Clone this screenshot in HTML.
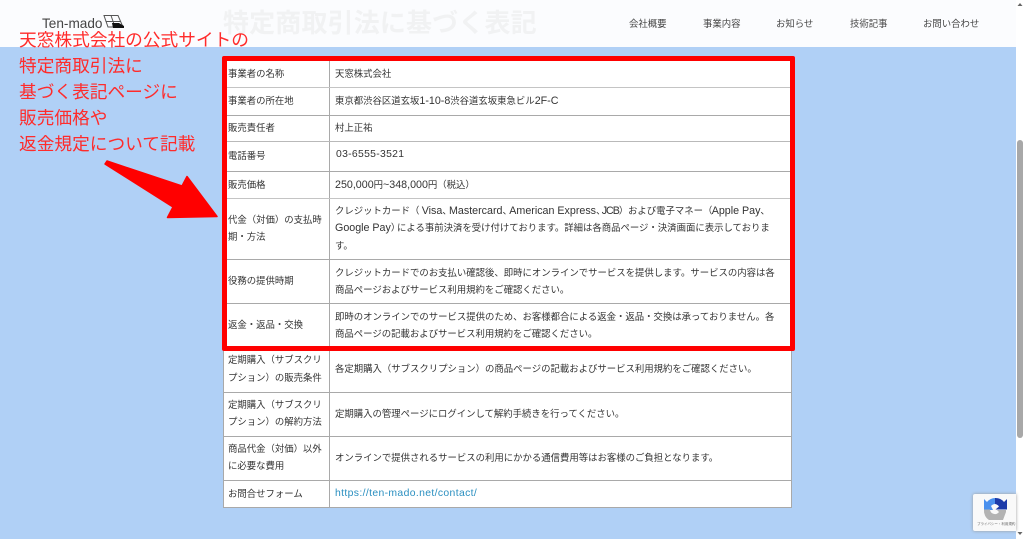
<!DOCTYPE html>
<html lang="ja"><head><meta charset="utf-8"><title>特定商取引法に基づく表記</title>
<style>
html,body{margin:0;padding:0;width:1024px;height:539px;overflow:hidden;background:#b0d0f6;}
body{position:relative;font-family:"Liberation Sans","Noto Sans CJK JP",sans-serif;color:#333;}
.a{position:absolute;white-space:nowrap;}
.t{position:absolute;white-space:nowrap;font-size:9.4px;line-height:14px;color:#333;}
.t b{font-weight:400;font-size:10.7px;}
.l{left:228px}.r{left:335px}
.h{position:absolute;left:224px;width:568px;height:1px;background:#a9a9a9;}
.n{position:absolute;top:17px;font-size:9.4px;line-height:14px;color:#444;white-space:nowrap;}
.m{position:absolute;left:19px;font-size:17.7px;line-height:26px;color:#ff2b2b;white-space:nowrap;}
</style></head><body>
<div class="a" style="left:0;top:0;width:1016px;height:47px;background:#fbfcfe;"></div>
<div class="a" style="left:223px;top:7px;font-size:26px;letter-spacing:.15px;line-height:32px;font-weight:700;color:#f1f2f3;">特定商取引法に基づく表記</div>
<div class="a" style="left:42px;top:15px;font-size:13.6px;line-height:18px;color:#444;">Ten-mado</div>
<svg class="a" style="left:100px;top:10px" width="30" height="24" viewBox="100 10 30 24"><g fill="none" stroke="#555" stroke-width="1"><path d="M104 15.500H118L123 27H108Z"/><path d="M105.500 21.500H120.500M111 15.500L115 27"/></g><path d="M112 23H119L124 26V28H113Z" fill="#111"/></svg>
<span class="n" style="left:629px">会社概要</span>
<span class="n" style="left:703px">事業内容</span>
<span class="n" style="left:776px">お知らせ</span>
<span class="n" style="left:850px">技術記事</span>
<span class="n" style="left:923px">お問い合わせ</span>

<div class="a" style="left:223px;top:56px;width:569px;height:452px;background:#fff;border-right:1px solid #a9a9a9;border-left:1px solid #a9a9a9;border-bottom:1px solid #a9a9a9;box-sizing:border-box;"></div>
<div class="a" style="left:329px;top:56px;width:1px;height:452px;background:#a9a9a9;"></div>
<div class="h" style="top:87px;background:#c4c4c4"></div><div class="h" style="top:115px"></div><div class="h" style="top:141px;background:#b9b9b9"></div><div class="h" style="top:171px"></div><div class="h" style="top:198px;background:#c4c4c4"></div><div class="h" style="top:259px"></div><div class="h" style="top:303px"></div><div class="h" style="top:392px"></div><div class="h" style="top:436px"></div><div class="h" style="top:480px"></div>

<span class="t l" style="top:67px">事業者の名称</span><span class="t r" style="top:67px">天窓株式会社</span>
<span class="t l" style="top:94px">事業者の所在地</span><span class="t r" style="top:94px">東京都渋谷区道玄坂<b>1-10-8</b>渋谷道玄坂東急ビル<b>2F-C</b></span>
<span class="t l" style="top:121px">販売責任者</span><span class="t r" style="top:121px">村上正祐</span>
<span class="t l" style="top:149px">電話番号</span><span class="t" style="left:336px;top:148px;font-size:10.4px;letter-spacing:.3px">03-6555-3521</span>
<span class="t l" style="top:178px">販売価格</span><span class="t r" style="top:178px"><b>250,000</b>円<b>~348,000</b>円（税込）</span>
<span class="t l" style="top:213px">代金（対価）の支払時</span><span class="t l" style="top:230px">期・方法</span>
<span class="t r" style="top:204px">クレジットカード（</span>
<span class="t" style="left:421.700px;top:204px"><b>Visa</b>、</span>
<span class="t" style="left:449px;top:204px"><b>Mastercard</b>、</span>
<span class="t" style="left:509.300px;top:204px"><b>American Express</b>、</span>
<span class="t" style="left:601.700px;top:204px;"><b style="letter-spacing:-1px">JCB</b>）</span>
<span class="t" style="left:628px;top:204px">および電子マネー（</span>
<span class="t" style="left:711.700px;top:204px"><b>Apple Pay</b>、</span>
<span class="t r" style="top:221px"><b>Google Pay</b>）</span>
<span class="t" style="left:397px;top:221px">による事前決済を受け付けております。詳細は各商品ページ・決済画面に表示しておりま</span>
<span class="t r" style="top:239px">す。</span>
<span class="t l" style="top:274px">役務の提供時期</span>
<span class="t r" style="top:266px">クレジットカードでのお支払い確認後、即時にオンラインでサービスを提供します。サービスの内容は各</span>
<span class="t r" style="top:283px">商品ページおよびサービス利用規約をご確認ください。</span>
<span class="t l" style="top:318px">返金・返品・交換</span>
<span class="t r" style="top:310px">即時のオンラインでのサービス提供のため、お客様都合による返金・返品・交換は承っておりません。各</span>
<span class="t r" style="top:327px">商品ページの記載およびサービス利用規約をご確認ください。</span>
<span class="t l" style="top:353px">定期購入（サブスクリ</span><span class="t l" style="top:371px">プション）の販売条件</span>
<span class="t r" style="top:362px">各定期購入（サブスクリプション）の商品ページの記載およびサービス利用規約をご確認ください。</span>
<span class="t l" style="top:398px">定期購入（サブスクリ</span><span class="t l" style="top:415px">プション）の解約方法</span>
<span class="t r" style="top:407px">定期購入の管理ページにログインして解約手続きを行ってください。</span>
<span class="t l" style="top:442px">商品代金（対価）以外</span><span class="t l" style="top:459px">に必要な費用</span>
<span class="t r" style="top:451px">オンラインで提供されるサービスの利用にかかる通信費用等はお客様のご負担となります。</span>
<span class="t l" style="top:487px">お問合せフォーム</span>
<span class="t r" style="top:487px;font-size:10.4px;color:#2a8fc0;letter-spacing:.36px">https://ten-mado.net/contact/</span>

<div class="a" style="left:222px;top:56px;width:573px;height:295px;border:5px solid #f00;border-radius:2px;box-sizing:border-box;"></div>

<span class="m" style="top:27px">天窓株式会社の公式サイトの</span>
<span class="m" style="top:53px">特定商取引法に</span>
<span class="m" style="top:79px">基づく表記ページに</span>
<span class="m" style="top:105px">販売価格や</span>
<span class="m" style="top:131px">返金規定について記載</span>
<svg class="a" style="left:100px;top:155px" width="120" height="66" viewBox="100 155 120 66"><path d="M107 161L182 186L187 176.500L217 216.500L167.500 217.500L173 207L105 164Z" fill="#f00" stroke="#f00" stroke-width="1.500" stroke-linejoin="round"/></svg>

<div class="a" style="left:1016px;top:0;width:8px;height:539px;background:#fff;"></div>
<div class="a" style="left:1017px;top:140px;width:6px;height:298px;background:#a8a8a8;border-radius:3px;"></div>
<svg class="a" style="left:1016px;top:0" width="8" height="539"><path d="M1.500 6L4 3L6.500 6Z M1.500 532L4 535L6.500 532Z" fill="#666"/></svg>

<div class="a" style="left:973px;top:494px;width:43px;height:37px;background:#f9f9f9;box-shadow:0 0 3px #999;border-radius:2px 0 0 2px;"></div>
<svg class="a" style="left:983px;top:497px" width="24" height="24" viewBox="0 0 24 24"><path d="M1 13V2L4 5A11 11 0 0 1 13 1V7A6 6 0 0 0 8 9L10 13Z" fill="#4a90ee"/><path d="M12 1A11 11 0 0 1 21 5L24 2V12.500H12.500L16 9.500A6 6 0 0 0 12 7Z" fill="#1c3aa9"/><path d="M1 12.500H7A5 5 0 0 0 16 15L14 13H23V15L20 23H6A11 11 0 0 1 1 12.500Z" fill="#b3b3b3"/></svg>
<div class="a" style="left:977px;top:522px;font-size:3.500px;line-height:5px;color:#666;">プライバシー・利用規約</div>
</body></html>
